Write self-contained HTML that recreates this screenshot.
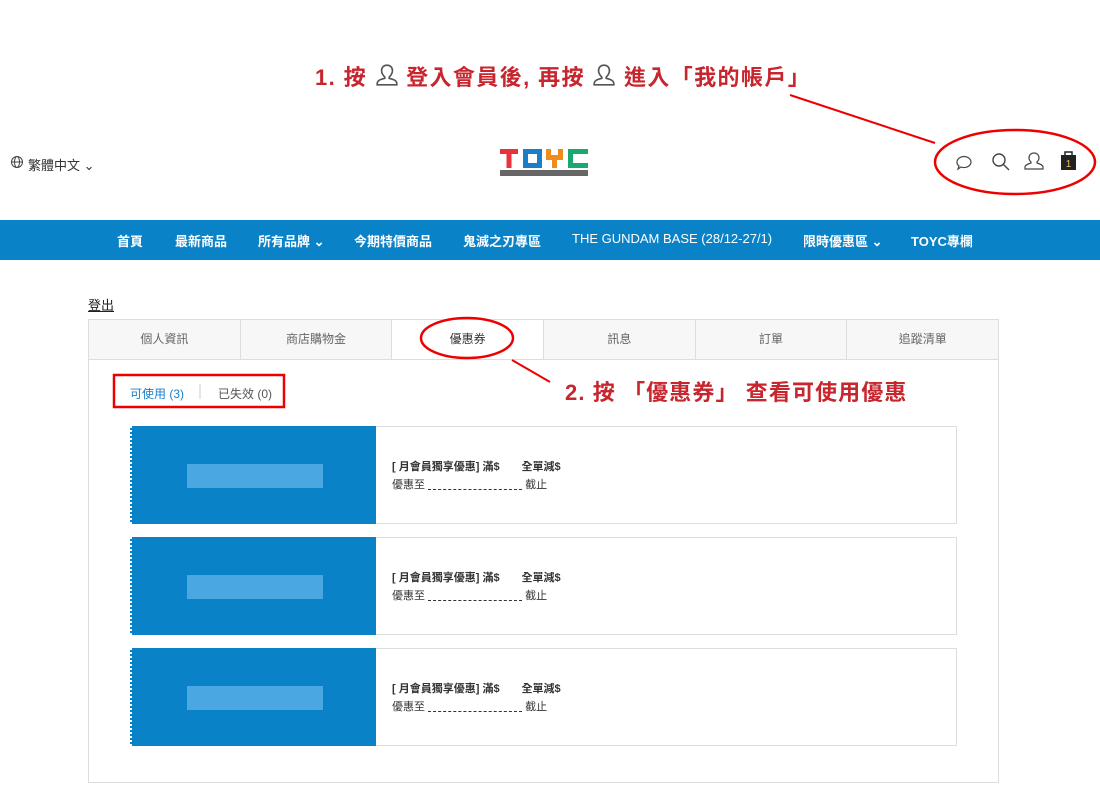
<!DOCTYPE html>
<html><head><meta charset="utf-8"><style>
*{margin:0;padding:0;box-sizing:border-box}
body{width:1100px;height:800px;background:#fff;font-family:"Liberation Sans","Noto Sans CJK TC",sans-serif;position:relative;overflow:hidden;color:#333}
.abs{position:absolute}
.ann{color:#c7262e;font-weight:bold;font-size:22px;white-space:nowrap;letter-spacing:1.4px}
.nav{top:220px;left:0;width:1100px;height:40px;background:#0a82c8;color:#fff;font-size:13px;font-weight:bold}
.nav span{position:absolute;top:11px}
.tabs{top:319px;left:88px;width:911px;height:41px;border:1px solid #ddd;background:#f7f7f7;display:flex}
.tabs div{flex:1;text-align:center;font-size:12px;color:#666;line-height:39px;border-right:1px solid #ddd}
.tabs div:last-child{border-right:none}
.box{top:359px;left:88px;width:911px;height:424px;border:1px solid #ddd;border-top:none}
.cp{left:130px;width:827px;height:98px;border:1px solid #ddd;border-left:none}
.cp .b{position:absolute;left:0;top:-1px;width:246px;height:98px;background:#0a82c8;border-left:2px dotted #fff}
.cp .blur{position:absolute;left:55px;top:38px;width:136px;height:24px;background:#5ab0e8;opacity:.8}
.cp .t1{position:absolute;left:262px;top:31px;font-size:11px;font-weight:bold;color:#333}
.cp .t2{position:absolute;left:262px;top:49px;font-size:11px;color:#333}
.dash{display:inline-block;width:94px;border-bottom:1px dashed #333;height:10px;vertical-align:middle}
</style></head><body>
<div class="abs ann" style="left:315px;top:60px">1. 按 <svg width="24" height="24" viewBox="0 0 22 22" style="vertical-align:-2px"><path d="M11 2c3 0 5 2 5 5 0 3-2 5-3 6v1c4 1 7 2 7 5v1H2v-1c0-3 3-4 7-5v-1c-1-1-3-3-3-6 0-3 2-5 5-5z" fill="none" stroke="#555" stroke-width="1.5"/></svg> 登入會員後, 再按 <svg width="24" height="24" viewBox="0 0 22 22" style="vertical-align:-2px"><path d="M11 2c3 0 5 2 5 5 0 3-2 5-3 6v1c4 1 7 2 7 5v1H2v-1c0-3 3-4 7-5v-1c-1-1-3-3-3-6 0-3 2-5 5-5z" fill="none" stroke="#555" stroke-width="1.5"/></svg> 進入「我的帳戶」</div>
<svg class="abs" style="left:0;top:0" width="1100" height="220"><line x1="790" y1="95" x2="935" y2="143" stroke="#e00" stroke-width="2"/><ellipse cx="1015" cy="162" rx="80" ry="32" fill="none" stroke="#e00" stroke-width="2.5"/>
<path d="M957 162a7 5.5 0 1 1 4 5l-3 2 1-3a6 5 0 0 1-2-4z" fill="none" stroke="#444" stroke-width="1.2"/>
<circle cx="999" cy="160" r="6" fill="none" stroke="#444" stroke-width="1.4"/><line x1="1003" y1="164" x2="1009" y2="170" stroke="#444" stroke-width="1.4"/>
<path d="M1034 153c3 0 5 2 5 5 0 2-1 3-2 4v1c3 1 6 2 6 4v2h-18v-2c0-2 3-3 6-4v-1c-1-1-2-2-2-4 0-3 2-5 5-5z" fill="none" stroke="#444" stroke-width="1.2"/>
<rect x="1061" y="155" width="15" height="15" fill="#222"/><path d="M1065 155v-3h7v3" fill="none" stroke="#222" stroke-width="1.5"/><text x="1068.5" y="167" font-size="10" fill="#e8c060" text-anchor="middle" font-family="Liberation Sans">1</text>
<circle cx="17" cy="162" r="5.5" fill="none" stroke="#444" stroke-width="1"/><ellipse cx="17" cy="162" rx="2.5" ry="5.5" fill="none" stroke="#444" stroke-width="1"/><line x1="11.5" y1="162" x2="22.5" y2="162" stroke="#444"/>
<path d="M500 149h18v5h-6.5v14h-5v-14H500z" fill="#e8323c"/>
<path d="M523 149h19v19h-19zM528 154v9h9v-9z" fill="#1a7fc8" fill-rule="evenodd"/>
<path d="M546 149h5v6h7v-6h5v11h-6v8h-5v-8h-6z" fill="#f08c1e"/>
<path d="M568 149h20v5h-15v9h15v5h-20z" fill="#19a870"/>
<rect x="500" y="170" width="88" height="6" fill="#666"/>
</svg>
<div class="abs" style="left:28px;top:155px;font-size:13px;color:#333">繁體中文 ⌄</div>
<div class="abs nav"><span style="left:117px">首頁</span><span style="left:175px">最新商品</span><span style="left:258px">所有品牌 ⌄</span><span style="left:354px">今期特價商品</span><span style="left:463px">鬼滅之刃專區</span><span style="left:572px;font-weight:normal">THE GUNDAM BASE (28/12-27/1)</span><span style="left:803px">限時優惠區 ⌄</span><span style="left:911px">TOYC專欄</span></div>
<div class="abs" style="left:88px;top:295px;font-size:13px;text-decoration:underline;color:#222">登出</div>
<div class="abs tabs"><div>個人資訊</div><div>商店購物金</div><div style="background:#fff;color:#333">優惠券</div><div>訊息</div><div>訂單</div><div>追蹤清單</div></div>
<div class="abs box"></div>
<svg class="abs" style="left:0;top:300px" width="1100" height="120"><ellipse cx="467" cy="38" rx="46" ry="20" fill="none" stroke="#e00" stroke-width="2.5"/><line x1="512" y1="60" x2="550" y2="82" stroke="#e00" stroke-width="2"/><rect x="114" y="75" width="170" height="32" fill="none" stroke="#e00" stroke-width="2.5"/><line x1="200" y1="84" x2="200" y2="99" stroke="#ccc"/></svg>
<div class="abs ann" style="left:565px;top:375px;letter-spacing:1.1px">2. 按 「優惠券」 查看可使用優惠</div>
<div class="abs" style="left:130px;top:385px;font-size:12px;color:#1a7fc8">可使用 (3)</div>
<div class="abs" style="left:218px;top:385px;font-size:12px;color:#555">已失效 (0)</div>
<div class="abs cp" style="top:426px"><div class="b"><div class="blur"></div></div><div class="t1">[ 月會員獨享優惠] 滿$　　全單減$</div><div class="t2">優惠至 <span class="dash"></span> 截止</div></div>
<div class="abs cp" style="top:537px"><div class="b"><div class="blur"></div></div><div class="t1">[ 月會員獨享優惠] 滿$　　全單減$</div><div class="t2">優惠至 <span class="dash"></span> 截止</div></div>
<div class="abs cp" style="top:648px"><div class="b"><div class="blur"></div></div><div class="t1">[ 月會員獨享優惠] 滿$　　全單減$</div><div class="t2">優惠至 <span class="dash"></span> 截止</div></div>
</body></html>
